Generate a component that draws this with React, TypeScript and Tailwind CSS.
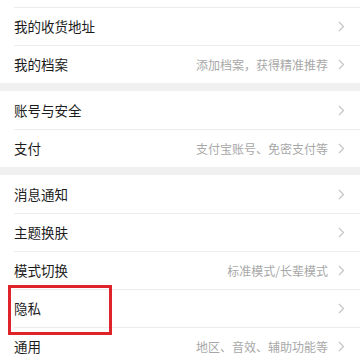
import React from "react";

type Item = { label: string; hint?: string; mark?: boolean };

const groups: Item[][] = [
  [{ label: "我的收货地址" }, { label: "我的档案", hint: "添加档案，获得精准推荐" }],
  [{ label: "账号与安全" }, { label: "支付", hint: "支付宝账号、免密支付等" }],
  [
    { label: "消息通知" },
    { label: "主题换肤" },
    { label: "模式切换", hint: "标准模式/长辈模式" },
    { label: "隐私", mark: true },
    { label: "通用", hint: "地区、音效、辅助功能等" },
  ],
];

function Chevron() {
  return (
    <svg width="7" height="11" viewBox="0 0 7 11" className="shrink-0">
      <path d="M1 1 L5.5 5.5 L1 10" fill="none" stroke="#c4c4c4" strokeWidth="1.2" />
    </svg>
  );
}

function Row({ item, divider }: { item: Item; divider: boolean }) {
  return (
    <div className="relative pl-[14px] bg-white">
      <div
        className={
          "h-[38px] flex items-center pr-[15px] " + (divider ? "border-t border-[#ededed]" : "")
        }
      >
        <span className="flex-1 text-[13.5px] text-[#1c1c1c] leading-none pt-[1px]">{item.label}</span>
        {item.hint && (
          <span className="text-[12px] text-[#a8a8a8] leading-none mr-[10px] pt-[1px]">{item.hint}</span>
        )}
        <Chevron />
      </div>
      {item.mark && (
        <div className="absolute z-10 left-[8px] top-[-4px] w-[104px] h-[50px] border-[3px] border-[#e0232b]" />
      )}
    </div>
  );
}

export default function App() {
  return (
    <div
      className="w-[360px] h-[360px] overflow-hidden bg-white"
      style={{ fontFamily: '"Noto Sans CJK SC", "Noto Sans", sans-serif' }}
    >
      <div className="h-[7px] bg-white" />
      {groups.map((g, gi) => (
        <div key={gi}>
          {gi > 0 && <div className="h-[8px] bg-[#f0f0f0]" />}
          {g.map((it, i) => (
            <Row key={it.label} item={it} divider={gi === 0 || i > 0} />
          ))}
        </div>
      ))}
    </div>
  );
}
